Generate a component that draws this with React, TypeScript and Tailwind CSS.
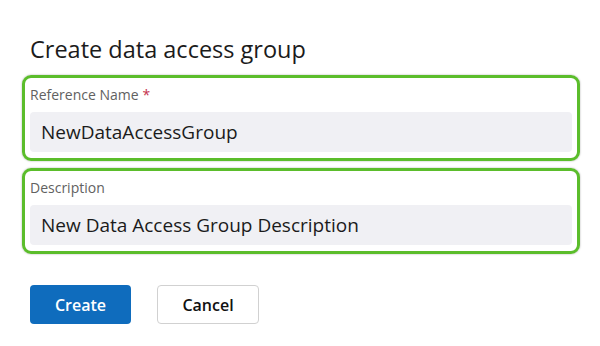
export default function App() {
  const font = { fontFamily: '"Open Sans", "Noto Sans", sans-serif' };
  return (
    <div className="w-[600px] h-[346px] bg-white pt-[34px] pl-[22px]" style={font}>
      <h1 className="pl-[8px] text-[23.5px] leading-[30px] text-[#1b1b1b] font-normal">Create data access group</h1>

      <div className="mt-[11px] flex flex-col gap-[7px] w-[558px]">
        <Field label="Reference Name" required value="NewDataAccessGroup" />
        <Field label="Description" value="New Data Access Group Description" />
      </div>

      <div className="mt-[31px] pl-[8px] flex gap-[26px]">
        <button className="w-[101px] h-[39px] rounded-[4px] bg-[#0f6cbd] text-white text-[16px] font-semibold">
          Create
        </button>
        <button className="w-[102px] h-[39px] rounded-[4px] bg-white border border-[#d1d1d1] text-[#111] text-[16px] font-semibold">
          Cancel
        </button>
      </div>
    </div>
  );
}

function Field({ label, value, required }: { label: string; value: string; required?: boolean }) {
  return (
    <div className="h-[86px] rounded-[9px] border-[3px] border-[#5bbd2b] shadow-[0_0_2px_rgba(0,0,0,0.35)] px-[5px] pt-[7px]">
      <div className="text-[14px] leading-[20px] text-[#616161]">
        {label}
        {required && <span className="text-[#c4314b] ml-[4px]">*</span>}
      </div>
      <div className="mt-[7px] h-[40px] rounded-[4px] bg-[#f0f0f4] flex items-center pl-[11px] text-[19px] text-[#1b1b1b]">
        {value}
      </div>
    </div>
  );
}
